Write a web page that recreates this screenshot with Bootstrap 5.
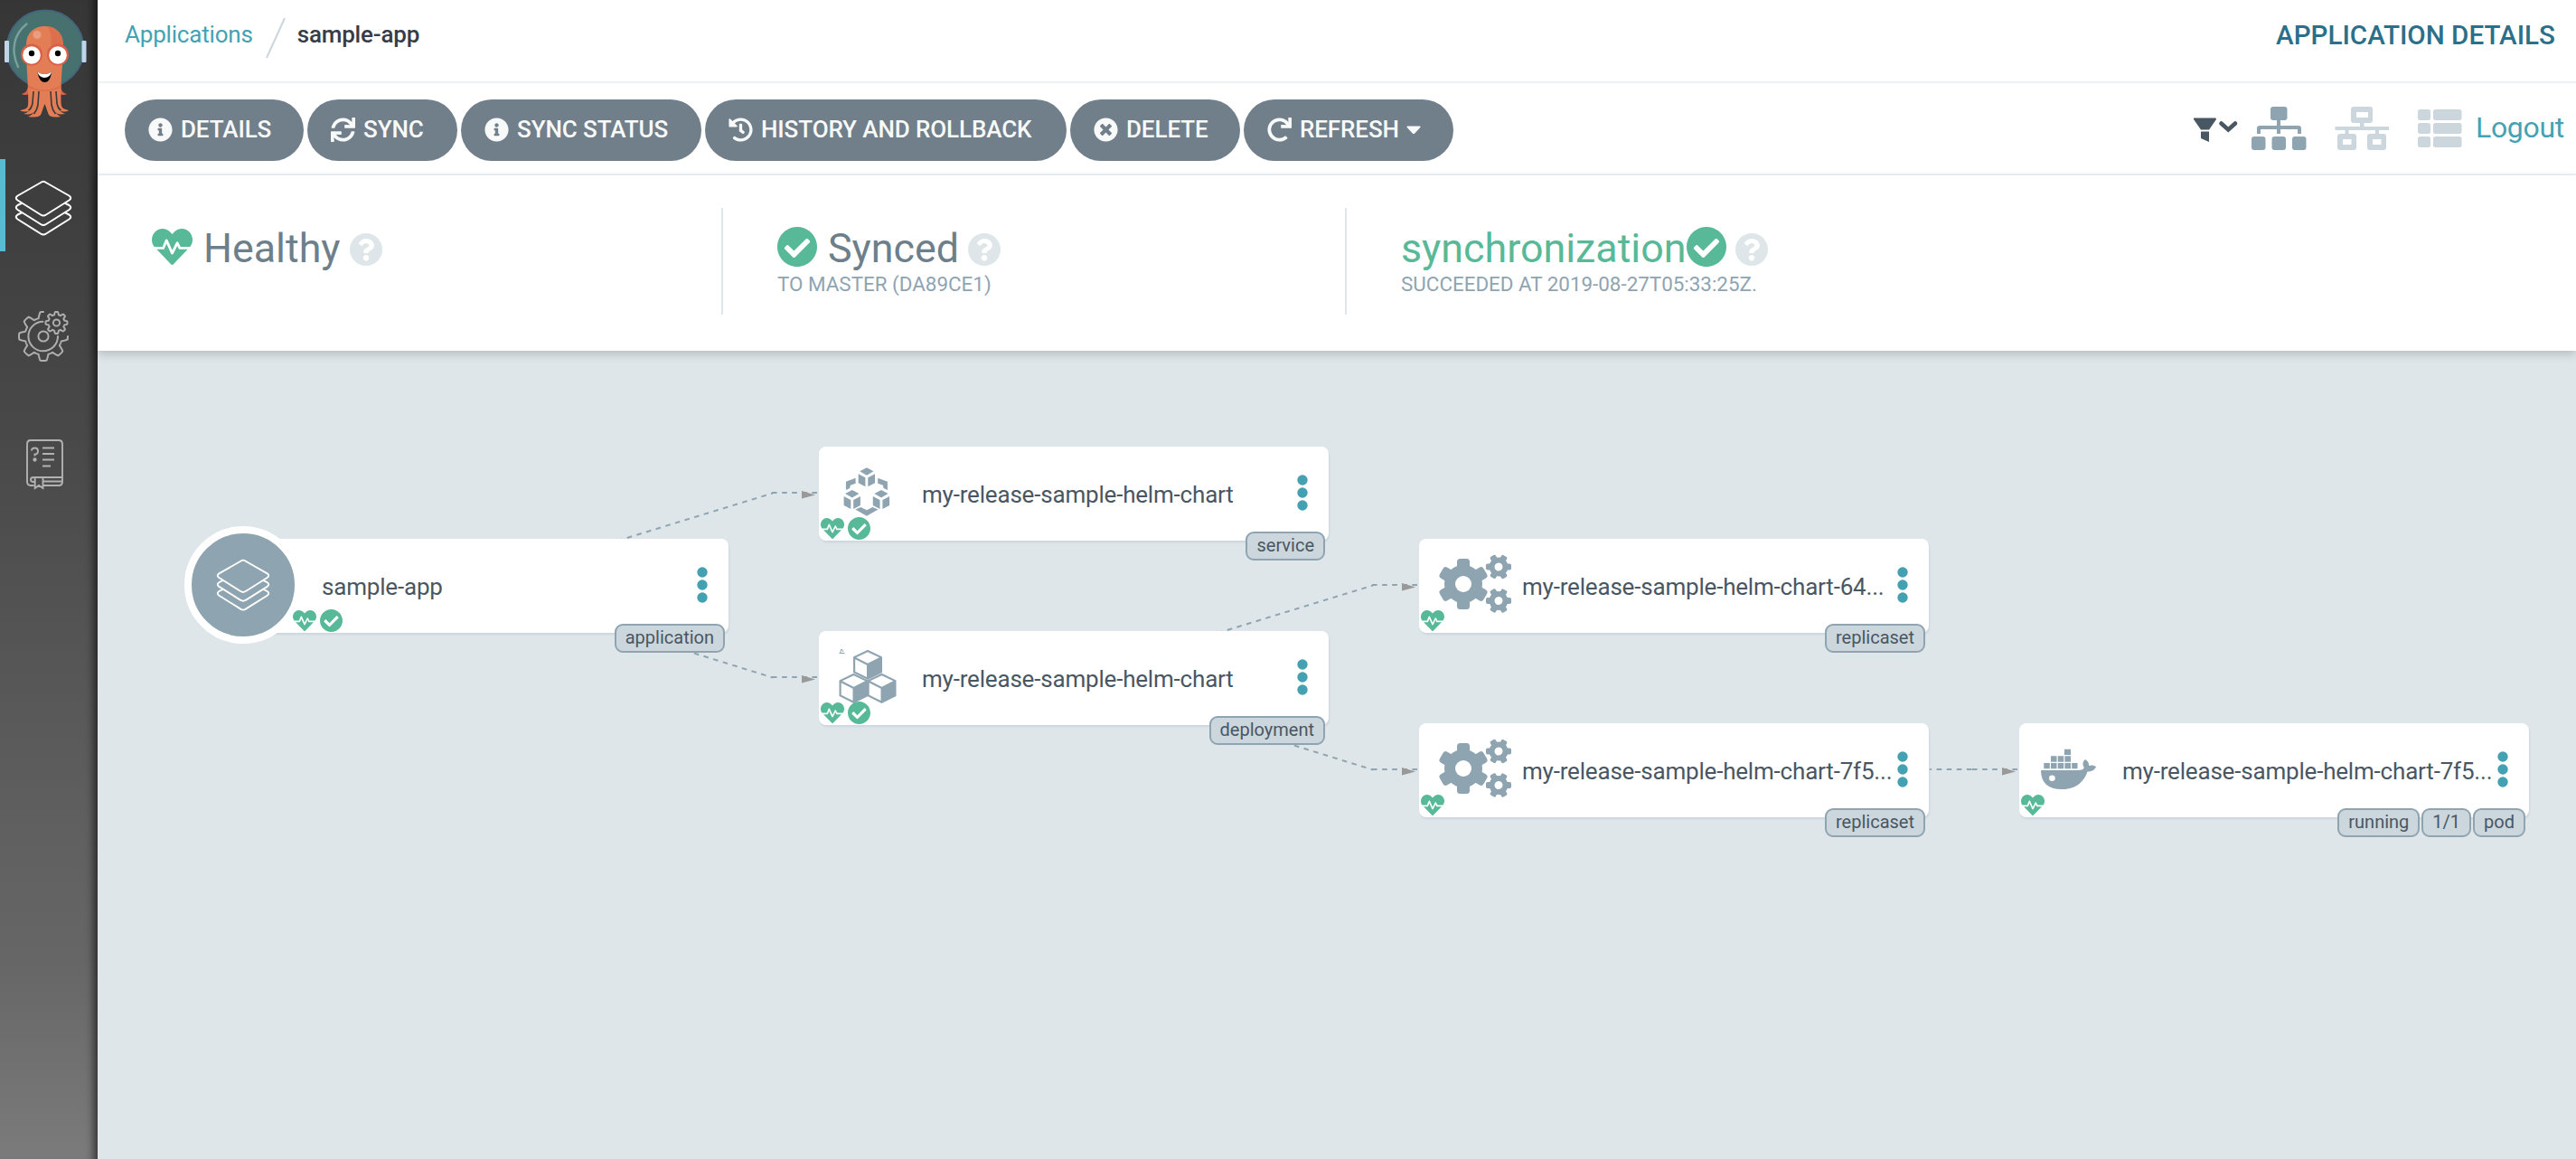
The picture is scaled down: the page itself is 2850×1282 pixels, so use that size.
<!DOCTYPE html>
<html lang="en">
<head>
<meta charset="utf-8">
<title>sample-app</title>
<link rel="stylesheet" href="https://cdn.jsdelivr.net/npm/bootstrap@5.3.0/dist/css/bootstrap.min.css">
<script src="https://cdn.jsdelivr.net/npm/bootstrap@5.3.0/dist/js/bootstrap.bundle.min.js"></script>
<style>
body{font-family:Roboto,"Liberation Sans",sans-serif;font-size:26px;color:#495763;height:1282px;overflow:hidden;background:#dee6e9;line-height:1.2}
svg{display:block;flex:none}
.side-nav{width:108px;height:1282px;background:linear-gradient(#363636 0,#484848 37%,#606060 72%,#666 83%,#7b7b7b 100%);box-shadow:inset -12px 0 10px -8px rgba(0,0,0,.6);padding-top:8px}
.side-logo{margin-bottom:42px}
.side-link{height:102px;border-left:6px solid transparent;padding:6px 0 0 10px;margin-bottom:40px}
.side-link.active{border-color:#58bcd0}
.main-col{min-width:0}
.top-line{height:92px;border-bottom:2px solid #eef2f5;padding:0 23px 12px 30px}
.top-line a{color:#45a2b3;letter-spacing:-.19px}
.crumb-slash{margin:6px 13px 0 14px}
.crumb{color:#363c4a;font-weight:500;letter-spacing:-.19px}
.page-title{color:#2b6f88;font-size:29.6px;font-weight:500;margin-top:2px}
.tool-line{height:102px;border-bottom:2px solid #eef2f5;padding:0 13px 0 30px}
.btn-row{margin-top:4px}
.btn-argo{height:68px;border-radius:34px;background:#717f8a;color:#f8fafa;font-size:26px;font-weight:500;line-height:1;padding:0 30px 2px 26px;border:0;letter-spacing:-.1px}
.btn-argo svg{margin-right:9px}
.btn-argo .caret{margin:1px 0 0 8px}
.logout{font-size:32px;color:#45a2b3;margin:0 0 2px 8px;letter-spacing:-.3px}
.status-panel{height:194px;padding-top:36px;box-shadow:0 4px 10px rgba(0,0,0,.18);z-index:2}
.status-cell{width:690px;height:118px;padding:21px 0 0 60px;border-right:2px solid #dee6e9}
.status-cell.first{width:692px}
.status-cell.last{border:0}
.status-line{font-size:44.8px;height:44px;line-height:44px;color:#6d7f8b}
.status-line span{margin-top:4px}
.status-help{margin:6px 0 0 10px}
.sub-line{font-size:22.4px;line-height:26px;margin-top:6px;color:#8fa4b1}
.green,.status-line.green{color:#57b997}
.graph{flex:1 1 auto}
.node{position:absolute;width:564px;height:104px;background:#fff;border-radius:8px;box-shadow:1px 2px 2px #ccd6dd}
.node-icon{position:absolute}
.node-name{position:absolute;left:114px;top:37px;white-space:nowrap;line-height:32px;letter-spacing:-.19px}
.kebab{position:absolute;left:528.5px;top:31px}
.marks{position:absolute;left:2px;bottom:1px;gap:4px}
.tags{position:absolute;right:4px;bottom:-22px;gap:2px}
.tag{height:32px;border:2px solid #8fa4b1;background:#ccd6dd;border-radius:9px;font-size:20px;line-height:27px;padding:0 10px}
.app-round{position:absolute;left:-38px;top:-14px;width:130px;height:130px;border:8px solid #fff;background:#8fa4b1;border-radius:50%}
</style>
</head>
<body>
<svg width="0" height="0" class="position-absolute">
<defs>
<symbol id="i-info" viewBox="0 0 512 512"><path d="M256 8C119.043 8 8 119.083 8 256c0 136.997 111.043 248 248 248s248-111.003 248-248C504 119.083 392.957 8 256 8zm0 110c23.196 0 42 18.804 42 42s-18.804 42-42 42-42-18.804-42-42 18.804-42 42-42zm56 254c0 6.627-5.373 12-12 12h-88c-6.627 0-12-5.373-12-12v-24c0-6.627 5.373-12 12-12h12v-64h-12c-6.627 0-12-5.373-12-12v-24c0-6.627 5.373-12 12-12h64c6.627 0 12 5.373 12 12v100h12c6.627 0 12 5.373 12 12v24z"/></symbol>
<symbol id="i-check" viewBox="8 8 496 496"><path d="M504 256c0 136.967-111.033 248-248 248S8 392.967 8 256 119.033 8 256 8s248 111.033 248 248zM227.314 387.314l184-184c6.248-6.248 6.248-16.379 0-22.627l-22.627-22.627c-6.248-6.249-16.379-6.249-22.628 0L216 308.118l-70.059-70.059c-6.248-6.248-16.379-6.248-22.628 0l-22.627 22.627c-6.248 6.248-6.248 16.379 0 22.627l104 104c6.249 6.249 16.379 6.249 22.628.001z"/></symbol>
<symbol id="i-times" viewBox="0 0 512 512"><path d="M256 8C119 8 8 119 8 256s111 248 248 248 248-111 248-248S393 8 256 8zm121.600 313.100c4.700 4.700 4.700 12.300 0 17L338 377.600c-4.700 4.700-12.300 4.700-17 0L256 312l-65.100 65.600c-4.700 4.700-12.300 4.700-17 0L134.400 338c-4.700-4.700-4.700-12.300 0-17l65.600-65-65.600-65.100c-4.700-4.700-4.700-12.300 0-17l39.600-39.600c4.700-4.700 12.300-4.700 17 0l65 65.700 65.100-65.600c4.700-4.700 12.300-4.700 17 0l39.600 39.600c4.700 4.700 4.700 12.300 0 17L312 256l65.600 65.100z"/></symbol>
<symbol id="i-help" viewBox="8 8 496 496"><path d="M504 256c0 136.997-111.043 248-248 248S8 392.997 8 256C8 119.083 119.043 8 256 8s248 111.083 248 248zM262.655 90c-54.497 0-89.255 22.957-116.549 63.758-3.536 5.286-2.353 12.415 2.715 16.258l34.699 26.310c5.205 3.947 12.621 3.008 16.665-2.122 17.864-22.658 30.113-35.797 57.303-35.797 20.429 0 45.698 13.148 45.698 32.958 0 14.976-12.363 22.667-32.534 33.976C247.128 238.528 216 254.941 216 296v4c0 6.627 5.373 12 12 12h56c6.627 0 12-5.373 12-12v-1.333c0-28.462 83.186-29.647 83.186-106.667 0-58.002-60.165-102-116.531-102zM256 338c-25.365 0-46 20.635-46 46 0 25.364 20.635 46 46 46s46-20.636 46-46c0-25.365-20.635-46-46-46z"/></symbol>
<symbol id="i-heart" viewBox="0 32 512 448" preserveAspectRatio="none"><path d="M320.200 243.800l-49.700 99.400c-6 12.100-23.400 11.700-28.900-.6l-56.900-126.300-30 71.700H60.600l182.500 186.500c7.100 7.300 18.600 7.300 25.700 0L451.400 288H342.300l-22.100-44.200zM473.700 73.900l-2.400-2.500c-51.500-52.600-135.800-52.600-187.400 0L256 100l-27.900-28.500c-51.500-52.700-135.900-52.700-187.400 0l-2.400 2.400C-10.400 123.700-12.500 203 31 256h102.400l35.900-86.200c5.400-12.900 23.600-13.100 29.400-.4l58.200 129.300 49-97.900c5.900-11.800 22.700-11.800 28.600 0l27.600 55.200H481c43.500-53 41.400-132.300-7.300-182.100z"/></symbol>
<symbol id="i-history" viewBox="0 0 512 512"><path d="M504 255.531c.253 136.640-111.180 248.372-247.820 248.468-59.015.042-113.223-20.530-155.822-54.911-11.077-8.940-11.905-25.541-1.839-35.607l11.267-11.267c8.609-8.609 22.353-9.551 31.891-1.984C173.062 425.135 212.781 440 256 440c101.705 0 184-82.311 184-184 0-101.705-82.311-184-184-184-48.814 0-93.149 18.969-126.068 49.932l50.754 50.754c10.080 10.080 2.941 27.314-11.313 27.314H24c-8.837 0-16-7.163-16-16V38.627c0-14.254 17.234-21.393 27.314-11.314l49.372 49.372C129.209 34.136 189.552 8 256 8c136.810 0 247.747 110.780 248 247.531zm-180.912 78.784l9.823-12.630c8.138-10.463 6.253-25.542-4.210-33.679L288 256.349V152c0-13.255-10.745-24-24-24h-16c-13.255 0-24 10.745-24 24v135.651l65.409 50.874c10.463 8.137 25.541 6.253 33.679-4.210z"/></symbol>
<symbol id="i-sync" viewBox="0 0 512 512"><path d="M440.935 12.574l3.966 82.766C399.416 41.904 331.674 8 256 8 134.813 8 33.933 94.924 12.296 209.824 10.908 217.193 16.604 224 24.103 224h49.084c5.570 0 10.377-3.842 11.676-9.259C103.407 137.408 172.931 80 256 80c60.893 0 114.512 30.856 146.104 77.801l-101.530-4.865c-6.845-.328-12.574 5.133-12.574 11.986v47.411c0 6.627 5.373 12 12 12h200.333c6.627 0 12-5.373 12-12V12c0-6.627-5.373-12-12-12h-47.411c-6.853 0-12.315 5.729-11.987 12.574zM256 432c-60.895 0-114.517-30.858-146.109-77.805l101.868 4.871c6.845.327 12.573-5.134 12.573-11.986v-47.412c0-6.627-5.373-12-12-12H12c-6.627 0-12 5.373-12 12V500c0 6.627 5.373 12 12 12h47.385c6.863 0 12.328-5.745 11.985-12.599l-4.129-82.575C112.725 470.166 180.405 504 256 504c121.187 0 222.067-86.924 243.704-201.824 1.388-7.369-4.308-14.176-11.807-14.176h-49.084c-5.570 0-10.377 3.842-11.676 9.259C408.593 374.592 339.069 432 256 432z"/></symbol>
<symbol id="i-redo" viewBox="0 0 512 512"><path d="M500.330 0h-47.410a12 12 0 0 0-12 12.570l4 82.760A247.420 247.420 0 0 0 256 8C119.340 8 7.900 119.530 8 256.190 8.100 393.070 119.100 504 256 504a247.100 247.100 0 0 0 166.180-63.910 12 12 0 0 0 .48-17.430l-34-34a12 12 0 0 0-16.380-.55A176 176 0 1 1 402.100 157.800l-101.530-4.870a12 12 0 0 0-12.570 12v47.410a12 12 0 0 0 12 12h200.330a12 12 0 0 0 12-12V12a12 12 0 0 0-12-12z"/></symbol>
<symbol id="i-layers" viewBox="0 0 64 62"><g fill="none" stroke="#fff" stroke-width="2" stroke-linejoin="round"><path d="M29 3Q32 .5 35 3L60.500 17.500Q64 20 60.500 22.500L35 38.500Q32 40.500 29 38.500L3.500 22.500Q0 20 3.500 17.500Z"/><path d="M8.500 25.500L3.500 28Q0 30.500 3.500 33L29 49Q32 51 35 49L60.500 33Q64 30.500 60.500 28L55.500 25.500"/><path d="M8.500 36L3.500 38.500Q0 41 3.500 43.500L29 59.500Q32 61.500 35 59.500L60.500 43.500Q64 41 60.500 38.500L55.500 36"/></g></symbol>
<symbol id="i-dots" viewBox="0 0 12 40"><g fill="#44a1b2"><circle cx="6" cy="6" r="5.700"/><circle cx="6" cy="20" r="5.700"/><circle cx="6" cy="34" r="5.700"/></g></symbol>
<symbol id="i-cog" viewBox="-28 -28 56 56"><g><rect x="-7" y="-28" width="14" height="56" rx="3.500"/><rect x="-7" y="-28" width="14" height="56" rx="3.500" transform="rotate(60)"/><rect x="-7" y="-28" width="14" height="56" rx="3.500" transform="rotate(120)"/><circle r="21"/></g><circle r="9" fill="#fff"/></symbol>
<symbol id="i-gears" viewBox="0 0 82 66"><g fill="#8fa4b1"><use href="#i-cog" x="0" y="5" width="56" height="56"/><g transform="rotate(30 67 14)"><use href="#i-cog" x="53" y="0" width="28" height="28"/></g><g transform="rotate(30 67 51.500)"><use href="#i-cog" x="53" y="37.500" width="28" height="28"/></g></g></symbol>
</defs>
</svg>

<div class="d-flex">
<nav class="side-nav flex-shrink-0">
  <svg class="side-logo" width="100" height="126" viewBox="0 8 100 126">
    <circle cx="50" cy="54" r="42.500" fill="#47716f" stroke="#45657d" stroke-width="2"/>
    <path d="M29.500 26.500C16 37 11 55 20 74" fill="none" stroke="#7ba09e" stroke-width="2.400" stroke-linecap="round"/>
    <rect x="5" y="45" width="5" height="24" rx="1" fill="#c0d4ea"/><rect x="90.500" y="45" width="5" height="24" rx="1" fill="#c0d4ea"/>
    <path d="M31 95C30 101 28 103 23.500 104C28 106 32 105 34 102ZM67 95C68 101 70 103 74 104C70 106 66 105 64 102Z" fill="#d9634a"/>
    <path d="M29 49C29 36 38 29 49.500 29S70 36 70 49C70 65 68 80 67.500 98C67.500 110 67 117 69 119C71 121 74 121 76 122.500C72 124 67 123.500 65 122C68 124 70 125 72 126C66 127 62 126 61 123C62 126 65 128 67 129C61 130 55 130 53.500 126C52 122 51 118 49.500 115C48 118 47 122 45.500 126C44 130 38 130 31 129C34 128 37 126 38 123C37 126 32 127 26 126C29 125 31 124 33 122C31 124 26 124 22 122.500C25 121 28 121 30 119C32 117 31 110 31 98C30 80 29 65 29 49Z" fill="#e27d55"/>
    <path d="M37 101L36 114Q35 120 31.500 122M43 101L42 116Q41 122 37.500 126M56 101L57 116Q58 122 61.500 126M62 101L63 114Q64 120 67.500 122" fill="none" stroke="#3a3a3a" stroke-width="1.600"/>
    <path d="M52 29C58 35 57 50 56 56L70 52C70 38 63 30 52 29ZM31 94Q49.500 105 67.500 94L67.500 97Q49.500 104.500 31 97Z" fill="#dc6f4c"/>
    <circle cx="41" cy="38.500" r="4.600" fill="#eb9d80"/>
    <circle cx="35" cy="60.500" r="12" fill="#db5f47"/><circle cx="64" cy="60.500" r="12" fill="#db5f47"/>
    <circle cx="35" cy="61" r="9.800" fill="#fff"/><circle cx="64" cy="61" r="9.800" fill="#fff"/>
    <circle cx="35" cy="59" r="3.200"/><circle cx="64" cy="59" r="3.200"/>
    <path d="M41.500 79.500Q49 84.500 57 79.500C56 88 53 91 49.500 91S43 88 41.500 79.500Z"/>
    <path d="M41.500 79.500Q49 84.500 57 79.500Q55.500 86 49.300 86T41.500 79.500Z" fill="#fff"/>
  </svg>
  <div class="side-link active d-flex align-items-center"><svg width="64" height="62"><use href="#i-layers"/></svg></div>
  <div class="side-link d-flex align-items-center"><svg width="64" height="62" viewBox="16 341 64 62" fill="none" stroke="#aeaeae" stroke-width="2" stroke-linecap="round"><path data-gear="48 372 20.500 27 8 0 270"/><path data-gear="62.500 357 9 12 8 0 360"/><circle cx="62.500" cy="357" r="3.600"/><circle cx="48" cy="372" r="5.600"/><path d="M64 372A16.300 16.300 0 1 1 47.500 355.700"/></svg></div>
  <div class="side-link d-flex align-items-center"><svg width="64" height="62" viewBox="16 483.500 64 62" fill="none" stroke="#b2b2b2" stroke-width="1.900"><path d="M37.500 537.500H34Q30 537.500 30 533V492Q30 487.500 34 487.500H65Q69 487.500 69 492V533.500Q69 537.500 65 537.500H47.500M69 528.500H37Q34 528.500 34 531T37 533.500H38.500M47.500 533H68M38.700 529V540.500L43 537.500L47.500 540.500V529M47 496H60M47 502.500H60M47 509H60M47 516H56"/><path d="M35 499Q35 496 38.500 496T42 499.500T38.500 503V505"/><circle cx="38.500" cy="509" r="1.200" fill="#b2b2b2"/></svg></div>
</nav>

<main class="main-col flex-grow-1 d-flex flex-column vh-100">
  <header class="top-line bg-white d-flex align-items-center">
    <a href="#" class="text-decoration-none">Applications</a>
    <svg class="crumb-slash" width="22" height="46" viewBox="0 0 22 46"><path d="M1 45L21 1" stroke="#ccd6dd" stroke-width="2"/></svg>
    <span class="crumb">sample-app</span>
    <span class="page-title ms-auto">APPLICATION DETAILS</span>
  </header>
  <div class="tool-line bg-white d-flex align-items-center">
    <div class="btn-row d-flex gap-1">
      <button class="btn btn-argo d-flex align-items-center" style="width:198px"><svg width="27" height="27" fill="currentColor"><use href="#i-info"/></svg>DETAILS</button>
      <button class="btn btn-argo d-flex align-items-center" style="width:166px"><svg width="27" height="27" fill="currentColor"><use href="#i-sync"/></svg>SYNC</button>
      <button class="btn btn-argo d-flex align-items-center" style="width:266px"><svg width="27" height="27" fill="currentColor"><use href="#i-info"/></svg>SYNC&nbsp;STATUS</button>
      <button class="btn btn-argo d-flex align-items-center" style="width:400px"><svg width="27" height="27" fill="currentColor"><use href="#i-history"/></svg>HISTORY&nbsp;AND&nbsp;ROLLBACK</button>
      <button class="btn btn-argo d-flex align-items-center" style="width:188px"><svg width="27" height="27" fill="currentColor"><use href="#i-times"/></svg>DELETE</button>
      <button class="btn btn-argo d-flex align-items-center" style="width:232px"><svg width="27" height="27" fill="currentColor"><use href="#i-redo"/></svg>REFRESH<svg class="caret" width="16" height="10" viewBox="0 0 16 10" fill="currentColor"><path d="M1 .5H15Q16 1 15.300 2L9 8.700Q8 9.500 7 8.700L.7 2Q0 1 1 .5Z"/></svg></button>
    </div>
    <svg class="ms-auto" width="310" height="60" viewBox="2420 112 310 60">
      <path d="M2426 130.500H2450.500L2451 132L2443 143.500H2434L2426 132ZM2434 145.500H2443V157L2434 153Z" fill="#495763"/>
      <path d="M2456.500 136.500L2464.300 143.500L2472 136.500" fill="none" stroke="#495763" stroke-width="4.600" stroke-linecap="round"/>
      <g fill="#8fa4b1"><rect x="2511" y="118" width="18.500" height="15" rx="3"/><rect x="2490" y="151" width="15.500" height="15" rx="3"/><rect x="2512.500" y="151" width="15.500" height="15" rx="3"/><rect x="2535" y="151" width="15.500" height="15" rx="3"/><path d="M2518 133H2522V139H2542Q2545 139 2545 142V148H2541V143H2522V148H2518V143H2500V148H2496V142Q2496 139 2499 139H2518Z"/></g>
      <g fill="#ccd6dd"><path fill-rule="evenodd" d="M2603 118H2621Q2624 118 2624 121V133Q2624 136 2621 136H2603Q2600 136 2600 133V121Q2600 118 2603 118ZM2606 124V130H2619V124ZM2588 148H2603Q2606 148 2606 151V163Q2606 166 2603 166H2588Q2585 166 2585 163V151Q2585 148 2588 148ZM2591 154V160H2600.500V154ZM2621 148H2636Q2639 148 2639 151V163Q2639 166 2636 166H2621Q2618 166 2618 163V151Q2618 148 2621 148ZM2624 154V160H2633.500V154Z"/><path d="M2610 136H2614.500V140H2642V144H2631V148H2627V144H2597.500V148H2593.500V144H2582.500V140H2610Z"/>
      <rect x="2674" y="121" width="14" height="12" rx="2.500"/><rect x="2674" y="136" width="14" height="12" rx="2.500"/><rect x="2674" y="151" width="14" height="12" rx="2.500"/><rect x="2691" y="121" width="31.500" height="12" rx="2.500"/><rect x="2691" y="136" width="31.500" height="12" rx="2.500"/><rect x="2691" y="151" width="31.500" height="12" rx="2.500"/></g>
    </svg>
    <a href="#" class="logout text-decoration-none">Logout</a>
  </div>
  <section class="status-panel bg-white d-flex position-relative">
    <div class="status-cell first">
      <div class="status-line d-flex align-items-center"><svg class="green" width="45" height="40" fill="currentColor"><use href="#i-heart"/></svg><span class="ps-2 ms-1">Healthy</span><svg class="status-help" width="36" height="36" fill="#dee6e9"><use href="#i-help"/></svg></div>
    </div>
    <div class="status-cell">
      <div class="status-line d-flex align-items-center"><svg class="green" width="44" height="44" fill="currentColor"><use href="#i-check"/></svg><span class="ps-2 ms-1">Synced</span><svg class="status-help" width="36" height="36" fill="#dee6e9"><use href="#i-help"/></svg></div>
      <div class="sub-line">TO MASTER (DA89CE1)</div>
    </div>
    <div class="status-cell last">
      <div class="status-line green d-flex align-items-center"><span>synchronization</span><svg width="44" height="44" fill="currentColor"><use href="#i-check"/></svg><svg class="status-help" width="36" height="36" fill="#dee6e9"><use href="#i-help"/></svg></div>
      <div class="sub-line">SUCCEEDED AT 2019-08-27T05:33:25Z.</div>
    </div>
  </section>

  <section class="graph position-relative">
    <svg class="position-absolute top-0 start-0" width="2742" height="894" viewBox="108 388 2742 894">
      <g fill="none" stroke="#8fa4b1" stroke-width="2" stroke-dasharray="5.600 5.500">
        <path d="M524 647L855 545.500"/><path d="M854 545H904.500"/>
        <path d="M524 647L855 749.500"/><path d="M854 749H904.500"/>
        <path d="M1188 749L1519 647.500"/><path d="M1518 647H1568.500"/>
        <path d="M1188 749L1519 851.500"/><path d="M1518 851H1568.500"/>
        <path d="M2131.500 851H2182"/><path d="M2182 851H2232.500"/>
      </g>
      <g fill="#999"><path d="M887 543V551.500L902 547.500Z"/><path d="M887 747V755.500L902 751.500Z"/><path d="M1551 645V653.500L1566 649.500Z"/><path d="M1551 849V857.500L1566 853.500Z"/><path d="M2215 849V857.500L2230 853.500Z"/></g>
    </svg>

    <div class="node" style="left:134px;top:208px">
      <div class="app-round d-flex align-items-center justify-content-center"><svg width="60" height="58"><use href="#i-layers"/></svg></div>
      <span class="node-name">sample-app</span>
      <svg class="kebab" width="12" height="40"><use href="#i-dots"/></svg>
      <div class="marks green d-flex align-items-center" style="left:82px"><svg width="26" height="23" fill="currentColor"><use href="#i-heart"/></svg><svg width="25" height="25" fill="currentColor"><use href="#i-check"/></svg></div>
      <div class="tags d-flex"><span class="tag">application</span></div>
    </div>

    <div class="node" style="left:798px;top:106px">
      <svg class="node-icon" style="left:26px;top:22px" width="54" height="56" fill="#8fa4b1">
        <g id="cube"><path d="M26.900 1.300L34.500 5.300L26.900 9.700L19.200 5.300ZM17.700 8.300L25.400 12.200V22.300L17.700 18.300ZM36 8.300L28.300 12.200V22.300L36 18.300Z"/></g>
        <use href="#cube" x="-16.100" y="24.700"/><use href="#cube" x="16.100" y="24.700"/>
        <path d="M14.600 12.700L3.900 16.700V26L8.200 24L8.900 20.700L14.600 18.700ZM39.200 12.700L49.900 16.700V26L45.600 24L44.900 20.700L39.200 18.700ZM20.400 45L26.900 48.300L33.400 45L39.500 47.500L26.900 54.700L14.300 47.500Z"/>
      </svg>
      <span class="node-name">my-release-sample-helm-chart</span>
      <svg class="kebab" width="12" height="40"><use href="#i-dots"/></svg>
      <div class="marks green d-flex align-items-center"><svg width="26" height="23" fill="currentColor"><use href="#i-heart"/></svg><svg width="25" height="25" fill="currentColor"><use href="#i-check"/></svg></div>
      <div class="tags d-flex"><span class="tag">service</span></div>
    </div>

    <div class="node" style="left:798px;top:310px">
      <svg class="node-icon" style="left:22px;top:20px" width="65" height="62" fill="#8fa4b1">
        <g id="box"><path d="M32 .8L48 8.500V26L32 34L16 26V8.500Z"/><path d="M32 3.200L44.800 9.300L32 15.800L19.200 9.300ZM18.200 11.200L31 17.700V31L18.200 24.800Z" fill="#fff"/></g>
        <use href="#box" x="-15.500" y="26"/><use href="#box" x="15.500" y="26"/>
        <path d="M1.500 4.500L3 -.5L5 3M.5 4.500H6.500" fill="none" stroke="#8fa4b1" stroke-width="1"/>
      </svg>
      <span class="node-name">my-release-sample-helm-chart</span>
      <svg class="kebab" width="12" height="40"><use href="#i-dots"/></svg>
      <div class="marks green d-flex align-items-center"><svg width="26" height="23" fill="currentColor"><use href="#i-heart"/></svg><svg width="25" height="25" fill="currentColor"><use href="#i-check"/></svg></div>
      <div class="tags d-flex"><span class="tag">deployment</span></div>
    </div>

    <div class="node" style="left:1462px;top:208px">
      <svg class="node-icon" style="left:21px;top:17px" width="82" height="66"><use href="#i-gears"/></svg>
      <span class="node-name">my-release-sample-helm-chart-64...</span>
      <svg class="kebab" width="12" height="40"><use href="#i-dots"/></svg>
      <div class="marks green" style="bottom:2px"><svg width="26" height="23" fill="currentColor"><use href="#i-heart"/></svg></div>
      <div class="tags d-flex"><span class="tag">replicaset</span></div>
    </div>

    <div class="node" style="left:1462px;top:412px">
      <svg class="node-icon" style="left:21px;top:17px" width="82" height="66"><use href="#i-gears"/></svg>
      <span class="node-name">my-release-sample-helm-chart-7f5...</span>
      <svg class="kebab" width="12" height="40"><use href="#i-dots"/></svg>
      <div class="marks green" style="bottom:2px"><svg width="26" height="23" fill="currentColor"><use href="#i-heart"/></svg></div>
      <div class="tags d-flex"><span class="tag">replicaset</span></div>
    </div>

    <div class="node" style="left:2126px;top:412px">
      <svg class="node-icon" style="left:24px;top:28px" width="62" height="46" fill="#8fa4b1">
        <path d="M25.900 .7H33V7H25.900ZM11 8.300H17.500V14.700H11ZM18.700 8.300H25.200V14.700H18.700ZM26.400 8.300H33V14.700H26.400ZM3.300 16H9.800V22.300H3.300ZM11 16H17.500V22.300H11ZM18.700 16H25.200V22.300H18.700ZM26.400 16H33V22.300H26.400ZM34.200 16H40.500V22.300H34.200Z"/>
        <path d="M0 24H41C46 24 48 22.500 47.500 20.500C45.500 17.500 46.500 14 49 12C52 14 53.500 16.500 53 19C56 18 59 18.500 61 20C59.500 24 56 25.500 51.500 25.500C47 38 38 45 23 45C8 45 0 38 0 24Z"/>
        <circle cx="12.400" cy="32.700" r="3.300" fill="#fff"/>
      </svg>
      <span class="node-name">my-release-sample-helm-chart-7f5...</span>
      <svg class="kebab" width="12" height="40"><use href="#i-dots"/></svg>
      <div class="marks green" style="bottom:2px"><svg width="26" height="23" fill="currentColor"><use href="#i-heart"/></svg></div>
      <div class="tags d-flex"><span class="tag">running</span><span class="tag">1/1</span><span class="tag">pod</span></div>
    </div>
  </section>
</main>
</div>
<script>
/* Outline gears: "cx cy innerRadius outerRadius teeth fromDeg toDeg" */
document.querySelectorAll('[data-gear]').forEach(function (p) {
  var a = p.dataset.gear.split(' ').map(Number), d = '';
  for (var t = a[5]; t <= a[6]; t += 1.5) {
    var w = Math.max(-1, Math.min(1, Math.cos(a[4] * t * Math.PI / 180) * 1.9));
    var r = (a[2] + a[3]) / 2 + w * (a[3] - a[2]) / 2, q = t * Math.PI / 180;
    d += (d ? 'L' : 'M') + (a[0] + r * Math.cos(q)).toFixed(2) + ' ' + (a[1] + r * Math.sin(q)).toFixed(2);
  }
  p.setAttribute('d', d);
});
</script>
</body>
</html>
